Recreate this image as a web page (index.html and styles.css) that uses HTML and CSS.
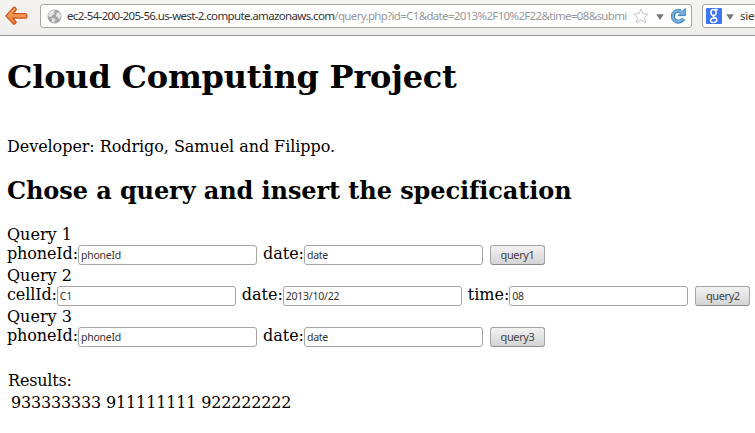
FILE: index.html
```html
<!DOCTYPE html>
<html lang="en">
<head>
<meta charset="utf-8">
<title>Cloud Computing Project</title>
<link rel="stylesheet" href="styles.css">
</head>
<body>
<header class="toolbar">
  <svg class="back" width="24" height="20" viewBox="0 0 24 20">
    <defs><linearGradient id="o" x1="0" y1="0" x2="0" y2="1"><stop offset="0" stop-color="#f9b36a"/><stop offset="1" stop-color="#e87d35"/></linearGradient></defs>
    <path d="M8.8 1.2 L.9 9.9 L8.8 18.4 Q10.6 18.4 11.2 16.2 L7.8 12.2 H20.2 Q21.9 12.2 21.9 10 Q21.9 7.7 20.2 7.7 H7.8 L11.2 3.8 Q10.9 1.2 8.8 1.2Z" fill="url(#o)" stroke="#cf5524" stroke-width="1.3" stroke-linejoin="round"/>
  </svg>
  <div class="urlbar">
    <svg class="globe" width="15" height="15" viewBox="0 0 15 15">
      <circle cx="7.5" cy="7.5" r="7" fill="#a5a5a5"/>
      <path d="M3 2.8 L6 1.2 L8.3 1.7 L6.8 3.4 L7.4 5 L5.3 6.2 L4.2 8 L1.2 7.2 L1.6 4.8Z M9.5 4.2 L12 3.2 L13.9 6 L13.6 9 L12 10.4 L10.8 8.1 L8.9 7.4Z M4.4 8.7 L7.7 9.4 L8.7 11 L6.5 13.8 L5 12.8Z" fill="#e4e4e4"/>
    </svg>
    <span class="url"><span class="host">ec2-54-200-205-56.us-west-2.compute.amazonaws.com</span><span class="path">/query.php?id=C1&amp;date=2013%2F10%2F22&amp;time=08&amp;submi</span></span>
    <svg class="star" width="16" height="16" viewBox="0 0 16 16"><path d="M8 1 L10 5.6 L15.2 6.1 L11.5 9.6 L12.6 14.6 L8 12 L3.4 14.6 L4.5 9.6 L.8 6.1 L6 5.6Z" fill="#fff" stroke="#c4c4c4" stroke-linejoin="round"/></svg>
    <svg class="caret" width="8" height="6" viewBox="0 0 8 6"><path d="M.2 .3H7.8L4 6Z" fill="#777"/></svg>
    <svg class="reload" width="16" height="16" viewBox="0 0 16 16">
      <path d="M13.2 10.6 A5.4 5.4 0 1 1 10.6 3.3" fill="none" stroke="#3f82b8" stroke-width="4.2"/>
      <path d="M15.3 .5 V7.6 H8 L10.4 5.2 Z" fill="#76aedb" stroke="#3f82b8" stroke-linejoin="round"/>
      <path d="M12.6 10.8 A5.4 5.4 0 1 1 10.8 3.5 L13 4" fill="none" stroke="#76aedb" stroke-width="2.4"/>
    </svg>
  </div>
  <div class="search">
    <span class="engine">
      <svg width="16" height="16" viewBox="0 0 16 16"><rect width="16" height="16" rx="1" fill="#3f75f4"/><g fill="none" stroke="#fff" stroke-width="1.5"><ellipse cx="7.5" cy="4.5" rx="2.6" ry="3"/><path d="M9 1.6H12M8 7.4Q6.2 8.4 8 9.2Q11 10 10.8 12.2Q10.5 14.5 7.6 14.5Q4.6 14.5 4.5 12.7Q4.4 10.4 8.8 10.1"/></g></svg>
    </span>
    <svg class="caret" width="8" height="6" viewBox="0 0 8 6"><path d="M.2 .3H7.8L4 6Z" fill="#777"/></svg>
    <span class="term">sie</span>
  </div>
</header>
<main>
  <h1>Cloud Computing Project</h1>
  <p class="dev">Developer: Rodrigo, Samuel and Filippo.</p>
  <h2>Chose a query and insert the specification</h2>
  <form class="query">
    <div>Query 1</div>
    <div class="fields"><label>phoneId:</label><input value="phoneId"><label>date:</label><input value="date"><button type="button">query1</button></div>
  </form>
  <form class="query">
    <div>Query 2</div>
    <div class="fields"><label>cellId:</label><input value="C1"><label>date:</label><input value="2013/10/22"><label>time:</label><input value="08"><button type="button">query2</button></div>
  </form>
  <form class="query">
    <div>Query 3</div>
    <div class="fields"><label>phoneId:</label><input value="phoneId"><label>date:</label><input value="date"><button type="button">query3</button></div>
  </form>
  <section class="results">
    <div>Results:</div>
    <div class="numbers"><span>933333333</span><span>911111111</span><span>922222222</span></div>
  </section>
</main>
</body>
</html>
```
FILE: styles.css
```css
* { box-sizing: border-box; }
body { margin: 0; height: 433px; overflow: hidden; background: #fff; color: #000; font: 16px/19px "DejaVu Serif", serif; }
svg { display: block; flex: none; }
.toolbar { display: flex; height: 36px; padding: 4px 0 0 5px; background: linear-gradient(#f4f3f2, #efeeec); border-bottom: 1px solid #949494; overflow: hidden; font: 12px/16px "Noto Sans", sans-serif; }
.back { margin: 2px 11px 0 0; }
.urlbar { display: flex; flex: none; align-items: center; width: 652px; height: 24px; padding: 0 4px 0 6px; background: #fff; border: 1px solid #aaa8a3; border-radius: 3px; }
.url { width: 561px; margin-left: 5px; overflow: hidden; white-space: nowrap; font-size: 11.5px; }
.host { color: #333; letter-spacing: -0.64px; }
.path { color: #999; letter-spacing: -0.66px; }
.star { margin-left: 5px; }
.urlbar .caret { margin: 2px 6px 0 7px; }
.search { display: flex; flex: none; align-items: center; width: 90px; height: 24px; margin-left: 10px; padding-left: 3px; background: #fff; border: 1px solid #aaa8a3; border-radius: 3px; }
.search .caret { margin: 2px 6px 0 4px; }
.term { color: #333; font-size: 11.5px; letter-spacing: -0.3px; }
main { padding: 22px 0 0 7px; white-space: nowrap; }
h1 { margin: 0; font-size: 32px; line-height: 38px; letter-spacing: -0.2px; }
.dev { margin: 41px 0 0; letter-spacing: -0.06px; }
h2 { margin: 20px 0 0; font-size: 24px; line-height: 29px; letter-spacing: -0.09px; }
.query { height: 41px; margin: 0; }
h2 + .query { margin-top: 20px; }
.fields { display: flex; align-items: flex-start; height: 22px; }
.fields label { line-height: 19px; letter-spacing: -0.12px; }
.fields input + label { letter-spacing: -0.01px; }
input { width: 179px; height: 20px; margin: 1px 6px 0 0; padding: 0 2px 1px; border: 1px solid #a8a59f; border-radius: 3px; background: #fff; color: #333; font: 10.5px/17px "Noto Sans", sans-serif; letter-spacing: -0.25px; }
button { width: 55px; height: 20px; margin: 1px 0 0 1px; padding: 0; border: 1px solid #a3a3a3; border-bottom-color: #8c8c8c; border-radius: 3px; background: linear-gradient(#f2f2f2, #d4d4d4); color: #444; font: 11px/18px "Noto Sans", sans-serif; letter-spacing: -0.4px; }
.results { margin: 23px 0 0 1px; letter-spacing: -0.17px; }
.numbers { display: flex; gap: 5px; margin: 3px 0 0 3px; }
```
